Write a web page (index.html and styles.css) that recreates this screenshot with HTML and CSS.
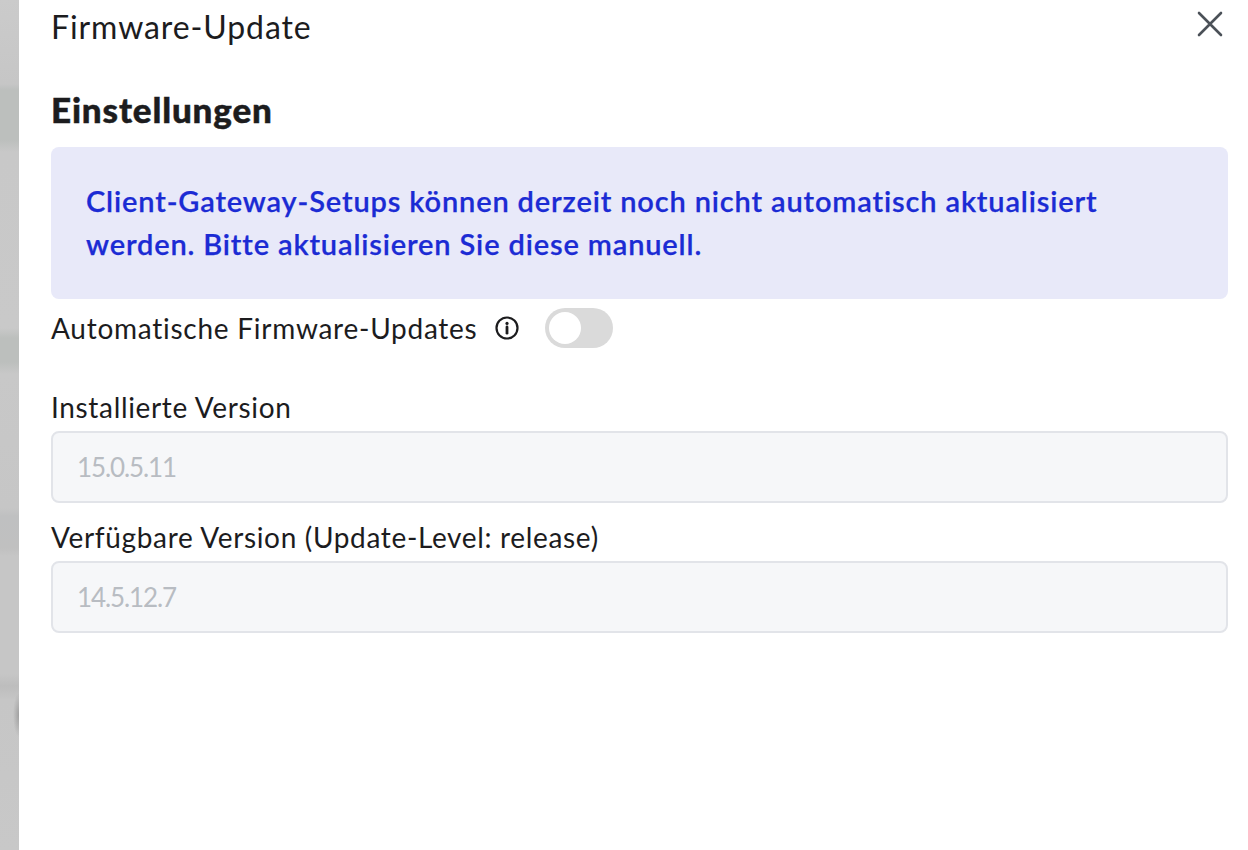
FILE: index.html
```html
<!DOCTYPE html>
<html lang="de">
<head>
    <meta charset="UTF-8">
    <title>Firmware-Update</title>
    <link rel="stylesheet" href="styles.css">
</head>
<body>
    <div class="backdrop"></div>

    <div class="panel">
        <div class="panel-header">
            <h1>Firmware-Update</h1>
            <button class="close-btn" aria-label="Schließen">
                <svg width="26" height="26" viewBox="0 0 26 26">
                    <path d="M2 2 L24 24 M24 2 L2 24" stroke="#4b5158" stroke-width="2.6" stroke-linecap="round" fill="none"/>
                </svg>
            </button>
        </div>

        <h2>Einstellungen</h2>

        <div class="notice">
            Client-Gateway-Setups können derzeit noch nicht automatisch aktualisiert<br>
            werden. Bitte aktualisieren Sie diese manuell.
        </div>

        <div class="toggle-row">
            <span class="toggle-label">Automatische Firmware-Updates</span>
            <svg class="info-icon" width="24" height="24" viewBox="0 0 24 24">
                <circle cx="12" cy="12" r="10.5" stroke="#1c1c1e" stroke-width="2.2" fill="none"/>
                <circle cx="12" cy="7.4" r="1.6" fill="#1c1c1e"/>
                <path d="M12 11 V17.2" stroke="#1c1c1e" stroke-width="2.8" stroke-linecap="round"/>
            </svg>
            <div class="toggle"><div class="toggle-knob"></div></div>
        </div>

        <div class="field first">
            <label>Installierte Version</label>
            <div class="field-input">15.0.5.11</div>
        </div>

        <div class="field">
            <label>Verfügbare Version (Update-Level: release)</label>
            <div class="field-input">14.5.12.7</div>
        </div>
    </div>
</body>
</html>
```

FILE: styles.css
```css
* {
    margin: 0;
    padding: 0;
    box-sizing: border-box;
}

html, body {
    height: 100%;
    overflow: hidden;
}

body {
    display: flex;
    background: white;
    color: #1c1c1e;
    font-family: Lato, "Noto Sans", sans-serif;
}

.backdrop {
    width: 19px;
    flex-shrink: 0;
    background:
        radial-gradient(ellipse 6px 22px at 19px 715px, #a0a0a0, rgba(160,160,160,0)),
        linear-gradient(180deg, #cbcbcb 0, #c6c6c6 84px, #bcbfbd 90px, #bcbfbd 140px, #c8c8c8 152px, #c9c9c9 328px, #bcbfbd 338px, #bcbfbd 362px, #c8c8c8 374px, #c6c6c6 508px, #bfc0c1 516px, #c0c0c0 548px, #c6c6c6 556px, #c6c6c6 674px, #bdbdbd 686px, #c6c6c6 700px, #c8c8c8 850px);
}

.panel {
    flex: 1;
    padding: 0 20px 0 32px;
}

.panel-header {
    display: flex;
    justify-content: space-between;
    align-items: center;
    height: 52px;
}

.panel-header h1 {
    font-size: 32px;
    font-weight: 400;
    letter-spacing: 0.9px;
}

.close-btn {
    background: none;
    border: none;
    display: flex;
    margin-right: 5px;
    margin-top: -5px;
}

h2 {
    font-size: 35px;
    font-weight: 900;
    line-height: 40px;
    letter-spacing: 0.85px;
    margin-top: 37px;
    margin-bottom: 18px;
    -webkit-text-stroke: 0.5px #1c1c1e;
}

.notice {
    background: #e8e9f9;
    color: #1b2bd4;
    border-radius: 8px;
    height: 152px;
    padding: 32px 35px;
    font-size: 29px;
    font-weight: 600;
    line-height: 43px;
    letter-spacing: 0.85px;
    -webkit-text-stroke: 0.25px #1b2bd4;
}

.toggle-row {
    display: flex;
    align-items: center;
    height: 40px;
    margin-top: 9px;
}

.toggle-label {
    font-size: 28px;
    letter-spacing: 0.74px;
}

.info-icon {
    margin-left: 18px;
}

.toggle {
    width: 68px;
    height: 40px;
    margin-left: 26px;
    border-radius: 20px;
    background: #dadada;
    padding: 4px;
}

.toggle-knob {
    width: 32px;
    height: 32px;
    border-radius: 50%;
    background: white;
}

.field {
    margin-top: 15px;
}

.field.first {
    margin-top: 40px;
}

.field label {
    display: block;
    font-size: 28px;
    line-height: 39px;
    padding-bottom: 4px;
    letter-spacing: 0.66px;
}

.field-input {
    height: 72px;
    background: #f6f7f9;
    border: 2px solid #e2e4e9;
    border-radius: 8px;
    padding: 0 24px;
    display: flex;
    align-items: center;
    color: #b8bcc2;
    font-size: 26px;
    letter-spacing: -1.1px;
}
```
